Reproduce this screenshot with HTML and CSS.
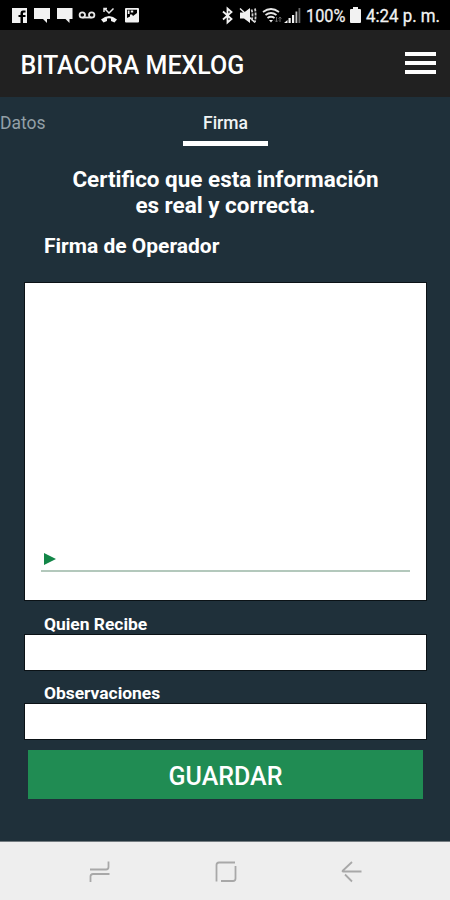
FILE: index.html
```
<!DOCTYPE html>
<html lang="es">

<head>
  <meta charset="UTF-8" />
  <meta name="viewport" content="width=device-width, initial-scale=1.0" />
  <title>Bitacora Mexlog</title>
  <link rel="stylesheet" href="styles.css">
</head>

<body>
  <div class="app">
    <!-- Status bar -->
    <div class="status-bar">
      <svg class="status-icons" width="140" height="30" viewBox="0 0 140 30" fill="#f2f2f2">
        <path d="M12 8h15v15h-4v-6h2.500v-2H23v-1.500q0-1 1-1h1.500v-2H23q-2.500 0-2.500 3V15h-2v2h2v6H12z" />
        <path d="M34 8h16v11h-3v4l-4-4h-9z" />
        <path d="M57 8h15.500v11h-3v4l-4-4H57z" />
        <g fill="none" stroke="#e6e6e6" stroke-width="1.800">
          <circle cx="82.300" cy="15" r="2.700" />
          <circle cx="91.700" cy="15" r="2.700" />
          <path d="M82.500 17.500h9" />
          <path d="M104.500 8.500l4.500 4.500 4.500-4.500M104 12V8.500h3" stroke-width="1.500" />
        </g>
        <path d="M101 19.500q8-7 16 0l-2.500 3-3.500-1.500v-2.500q-2-.7-4 0V21l-3.500 1.500z" />
        <path fill-rule="evenodd" d="M126 8h12q1 0 1 1v12.500q0 1-1 1h-12q-1 0-1-1V9q0-1 1-1zm1 1.800v8.200l3-1.500v-2h2l1 1.500 4-3V9.800zm.8.700h1.700v3.500h-1.700zm3 0h2.400v2h-2.400z" />
      </svg>
      <svg class="status-icons" width="230" height="30" viewBox="220 0 230 30" fill="#f2f2f2">
        <path d="M223 11.500l8.500 7.500-4 3.500v-14l4 3.500-8.500 7.500" fill="none" stroke="#f2f2f2" stroke-width="1.800" />
        <path d="M240 12.500h4l6-4.500v15l-6-4.500h-4z" />
        <path d="M240 8.500l15 14" fill="none" stroke="#f2f2f2" stroke-width="1.500" />
        <path d="M251.500 9.500q2 5.500 0 11.500M255 8.500q1.200 6.500 0 13.500" fill="none" stroke="#d0d0d0" stroke-width="1.800" stroke-dasharray="3 1" />
        <g fill="none" stroke="#e6e6e6" stroke-width="1.800">
          <path d="M263 12q8-6 16 0M265.500 15q5.500-4 11 0M267.500 18q3.500-2.500 7 0" />
        </g>
        <path d="M269 20h4l-2 2.500z" />
        <path d="M276.500 17v5m-1.500-1.500l1.500 1.500 1.500-1.500M280 22v-5m-1.500 1.500L280 17l1.500 1.500" fill="none" stroke="#666" stroke-width="1" />
        <path d="M284 23l3.500-3v3zM288.500 18h2.200v5h-2.200zM292 15h2.200v8H292z" />
        <path d="M295.500 11.500h1.800V23h-1.800z" fill="#c4c4c4" />
        <path d="M298.500 8h1.800v15h-1.800z" fill="#666" />
        <text class="status-text" x="306" y="22" textLength="39.500" lengthAdjust="spacingAndGlyphs">100%</text>
        <path d="M353 7h5v2h2q1 0 1 1v12q0 1-1 1h-9q-1 0-1-1V10q0-1 1-1h2z" />
        <text class="status-text" x="366" y="22" textLength="74" lengthAdjust="spacingAndGlyphs">4:24 p. m.</text>
      </svg>
    </div>

    <!-- Header -->
    <header class="header">
      <h1>BITACORA MEXLOG</h1>
      <div class="menu-btn">
        <span></span>
        <span></span>
        <span></span>
      </div>
    </header>

    <!-- Tabs -->
    <nav class="tabs">
      <a class="tab">Datos</a>
      <a class="tab active">Firma</a>
    </nav>

    <!-- Form -->
    <main class="form">
      <h2>Certifico que esta información<br>es real y correcta.</h2>
      <h3>Firma de Operador</h3>
      <div class="signature">
        <svg width="12" height="12" viewBox="0 0 12 12">
          <path d="M0 0l12 6-12 6z" fill="#138648" />
        </svg>
        <div class="signature-line"></div>
      </div>
      <label for="recibe">Quien Recibe</label>
      <input type="text" id="recibe" />
      <label for="observaciones">Observaciones</label>
      <input type="text" id="observaciones" />
      <button class="save-btn">GUARDAR</button>
    </main>

    <!-- Android buttons -->
    <div class="nav-bar">
      <svg width="22" height="24" viewBox="0 0 22 24">
        <path d="M1 9.500h16q2.500 0 2.500-2.500V1.500M20.500 14H4Q1.500 14 1.500 16.500V22" />
      </svg>
      <svg width="22" height="24" viewBox="0 0 22 24">
        <path d="M1.500 21.500V5q0-2.500 2.500-2.500h16M20.500 6v12.500q0 2.500-2.500 2.500H6" />
      </svg>
      <svg width="22" height="24" viewBox="0 0 22 24">
        <path d="M11 2l-9 8.500q-1 1 0 1h18.500M4 14.500l7 7" />
      </svg>
    </div>
  </div>
</body>

</html>
```
FILE: styles.css
```
* {
  box-sizing: border-box;
}

body {
  margin: 0;
  font-family: Roboto, "Liberation Sans", sans-serif;
  color: #ffffff;
}

.app {
  display: flex;
  flex-direction: column;
  width: 450px;
  height: 900px;
  background-color: #1f303a;
}

.status-bar {
  display: flex;
  justify-content: space-between;
  height: 30px;
  background-color: #000000;
}

.status-text {
  font-size: 18.5px;
  stroke: #f2f2f2;
  stroke-width: 0.3px;
}

.header {
  display: flex;
  justify-content: space-between;
  align-items: center;
  height: 67px;
  padding: 3px 14px 0 20.5px;
  background-color: #212121;
}

h1 {
  margin: 0;
  font-size: 25px;
  font-weight: 500;
}

.menu-btn {
  display: flex;
  flex-direction: column;
  gap: 5px;
  width: 31px;
  padding-bottom: 4px;
}

.menu-btn span {
  height: 4px;
  background-color: #ffffff;
}

.tabs {
  display: flex;
  gap: 137px;
  height: 49px;
}

.tab {
  width: 46px;
  padding-top: 16px;
  font-size: 17.5px;
  line-height: 20px;
  color: #93a0a7;
}

.tab.active {
  width: 85px;
  border-bottom: 5px solid #ffffff;
  text-align: center;
  font-weight: 500;
  color: #f0f3f4;
}

.form {
  display: flex;
  flex-direction: column;
  flex: 1;
  padding: 20px 24px 0 25px;
}

h2 {
  margin: 0;
  font-size: 22.45px;
  line-height: 26px;
  font-weight: 700;
  text-align: center;
}

h3 {
  margin: 15px 0 24px 19px;
  font-size: 21px;
  line-height: 26px;
  font-weight: 700;
}

.signature {
  display: flex;
  flex-direction: column;
  justify-content: flex-end;
  height: 317px;
  padding: 0 16px 28px;
  background-color: #ffffff;
  outline: 1px solid #0b1216;
}

.signature svg {
  margin: 0 0 5px 3px;
}

.signature-line {
  height: 2px;
  background-color: #b3c8bc;
}

label {
  height: 34px;
  padding: 12px 0 0 19px;
  font-size: 17.4px;
  line-height: 22px;
  font-weight: 700;
}

.signature + label {
  height: 35px;
  padding-top: 13px;
}

input {
  height: 35px;
  padding: 0 10px;
  border: none;
  background-color: #ffffff;
  outline: 1px solid #0b1216;
}

.save-btn {
  height: 49px;
  margin: 11px 3px 0;
  padding: 3px 0 0;
  border: none;
  background-color: #208c53;
  color: #ffffff;
  font-family: inherit;
  font-size: 25px;
  font-weight: 500;
}

.nav-bar {
  display: flex;
  justify-content: center;
  gap: 104px;
  height: 59px;
  padding: 18px 0 0 2px;
  border-top: 1px solid #737b80;
  background-color: #eeeeee;
}

.nav-bar svg {
  fill: none;
  stroke: #a8a8a8;
  stroke-width: 1.8;
}
```
